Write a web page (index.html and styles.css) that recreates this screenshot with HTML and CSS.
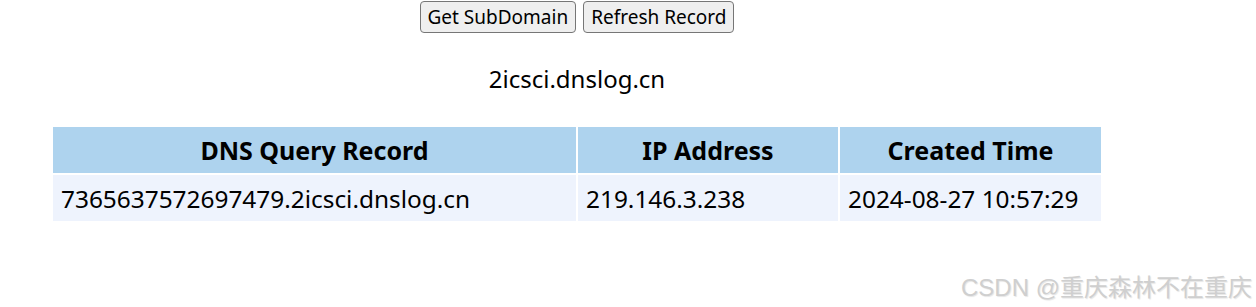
FILE: index.html
```html
<!DOCTYPE html>
<html lang="en">
<head>
  <meta charset="UTF-8">
  <title>DNSLog</title>
  <link rel="stylesheet" href="styles.css">
</head>
<body>
  <div class="page">
    <div class="actions">
      <button class="btn">Get SubDomain</button>
      <button class="btn">Refresh Record</button>
    </div>
    <p class="domain">2icsci.dnslog.cn</p>
    <table class="records">
      <thead>
        <tr>
          <th class="col-record">DNS Query Record</th>
          <th class="col-ip">IP Address</th>
          <th class="col-time">Created Time</th>
        </tr>
      </thead>
      <tbody>
        <tr>
          <td>7365637572697479.2icsci.dnslog.cn</td>
          <td>219.146.3.238</td>
          <td>2024-08-27 10:57:29</td>
        </tr>
      </tbody>
    </table>
  </div>
  <div class="watermark">CSDN @重庆森林不在重庆</div>
</body>
</html>
```

FILE: styles.css
```css
body {
  margin: 0;
  font-family: 'Noto Sans', 'Open Sans', sans-serif;
  color: #000;
  background: #fff;
}

.page {
  width: 1154px;
  display: flex;
  flex-direction: column;
  align-items: center;
}

.actions {
  display: flex;
  gap: 7px;
  padding-top: 1px;
}

.btn {
  font-family: 'Noto Sans', sans-serif;
  font-size: 19px;
  height: 32px;
  padding: 0 7px;
  background: #efefef;
  border: 1px solid #767676;
  border-radius: 4px;
  color: #000;
}

.domain {
  margin: 30px 0 0;
  font-size: 24px;
  line-height: 32px;
}

.records {
  margin-top: 30px;
  width: 1052px;
  border-collapse: collapse;
  font-size: 24.4px;
}

.records th,
.records td {
  border: 2px solid #fff;
  height: 46px;
  padding: 0 8px;
}

.records th {
  background: #aed3ee;
  font-size: 25px;
  font-weight: bold;
  text-align: center;
}

.records td {
  background: #eef3fd;
  text-align: left;
}

.col-record { width: 507px; }
.col-ip { width: 244px; }

.watermark {
  position: absolute;
  right: 4px;
  top: 268px;
  font-family: 'Liberation Sans', 'Noto Sans CJK SC', sans-serif;
  font-size: 24px;
  color: #cfcfcf;
  text-shadow: 1px 1px 1px #e6e6e6;
}
```
